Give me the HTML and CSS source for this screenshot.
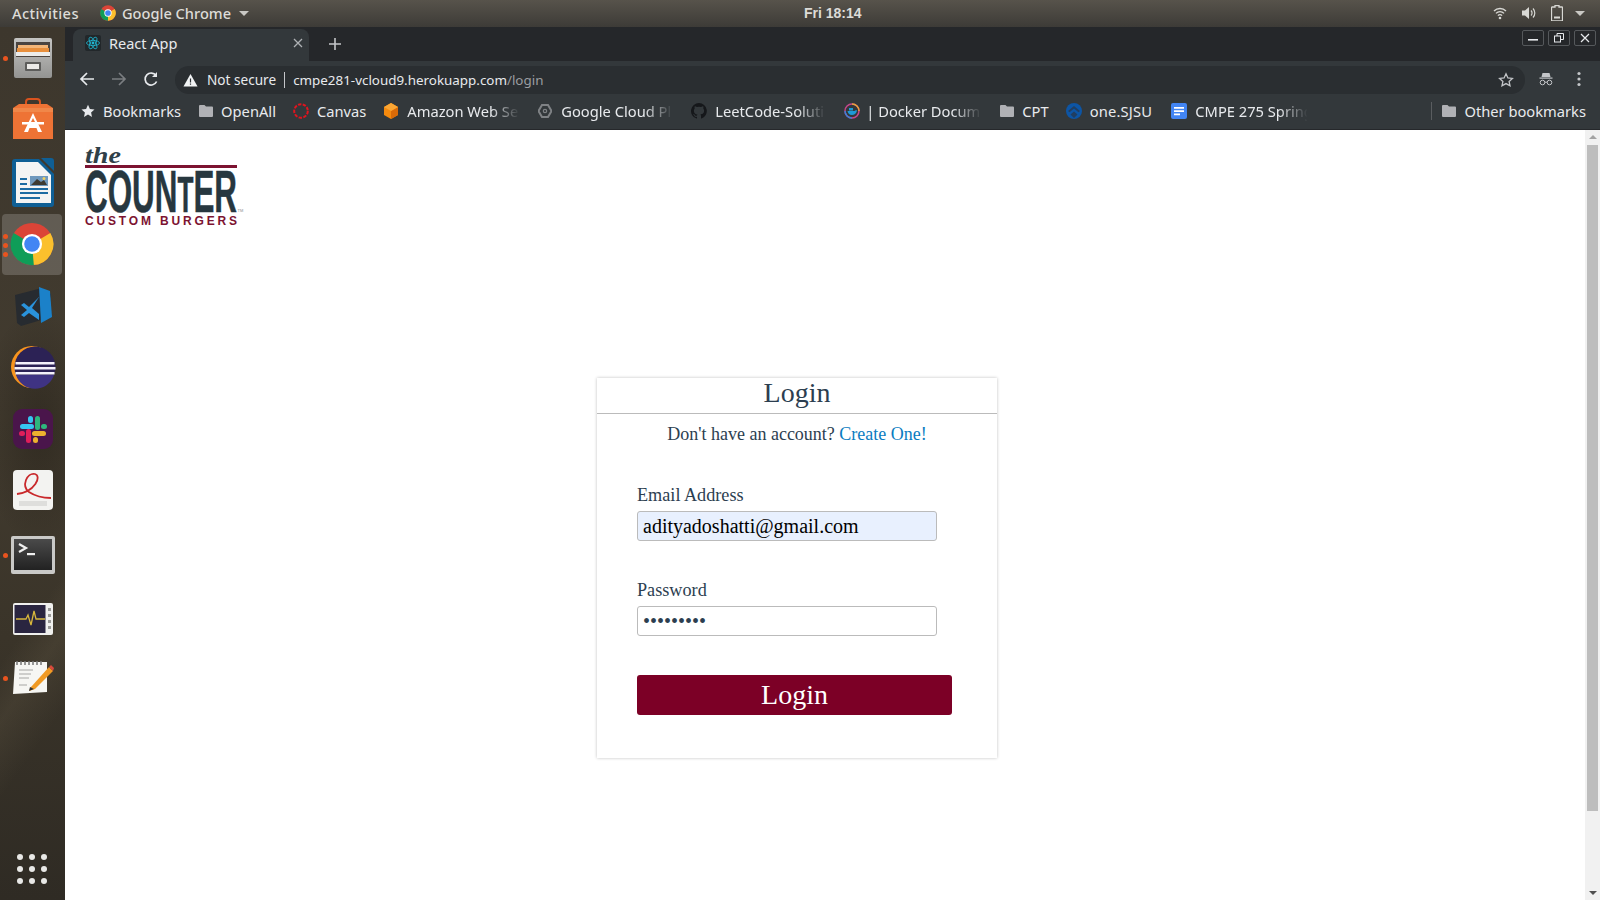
FILE: index.html
```html
<!DOCTYPE html>
<html lang="en">
<head>
  <meta charset="UTF-8">
  <title>React App</title>
  <link rel="stylesheet" href="styles.css">
</head>
<body>
  <!-- gnome top bar -->
  <div class="topbar">
    <div class="topbar-left">
      <span class="activities">Activities</span>
      <svg class="app-logo" width="16" height="16" viewBox="0 0 48 48"><circle cx="24" cy="24" r="23" fill="#db4437"/><path d="M24 24 L44 12 A23 23 0 0 1 24 47Z" fill="#fbc02d"/><path d="M24 24 L24 47 A23 23 0 0 1 4 12Z" fill="#0f9d58"/><circle cx="24" cy="24" r="11" fill="#fff"/><circle cx="24" cy="24" r="8.5" fill="#4285f4"/></svg>
      <span class="app-name">Google Chrome</span>
      <span class="caret"></span>
    </div>
    <div class="clock">Fri 18:14</div>
    <div class="tray">
      <svg width="14" height="14" viewBox="0 0 14 14" fill="none" stroke="#d8d8d4" stroke-width="1.4"><path d="M1 5a8.5 8.5 0 0 1 12 0M3 7.4a5.4 5.4 0 0 1 8 0M5 9.6a2.6 2.6 0 0 1 4 0"/><circle cx="7" cy="12" r="1.3" fill="#d8d8d4" stroke="none"/></svg>
      <svg width="16" height="14" viewBox="0 0 16 14" fill="none" stroke="#d8d8d4" stroke-width="1.2"><path d="M1 4.5h3L8 1v12L4 9.5H1z" fill="#d8d8d4" stroke="none"/><path d="M10 4.5a3.5 3.5 0 0 1 0 5M12 2.5a6.5 6.5 0 0 1 0 9"/></svg>
      <svg width="12" height="16" viewBox="0 0 12 16"><path d="M4 .5h4v1.5h3a.5.5 0 0 1 .5.5v13a.5.5 0 0 1-.5.5H1a.5.5 0 0 1-.5-.5v-13A.5.5 0 0 1 1 2h3z" fill="none" stroke="#d8d8d4" stroke-width="1.3"/><rect x="3" y="11.5" width="6" height="2" fill="#d8d8d4"/></svg>
      <span class="caret tray-caret"></span>
    </div>
  </div>

  <div class="desktop">
    <!-- ubuntu dock -->
    <div class="dock">
      <div class="dock-item">
        <span class="running"></span>
        <svg width="44" height="44" viewBox="0 0 44 44">
          <defs><linearGradient id="cabinet" x1="0" y1="0" x2="0" y2="1"><stop offset="0" stop-color="#c4c4c2"/><stop offset="1" stop-color="#949492"/></linearGradient></defs>
          <rect x="3" y="2" width="38" height="40" rx="2" fill="url(#cabinet)"/><rect x="5" y="6" width="34" height="15" fill="#4a4440"/><rect x="7" y="9" width="30" height="3" fill="#f4b678"/><rect x="6" y="12" width="32" height="4" fill="#e88f3c"/><rect x="5" y="16" width="34" height="4" fill="#ececea"/><rect x="14" y="26" width="16" height="9" rx="1" fill="#5d5d5b"/><rect x="16" y="28" width="12" height="5" fill="#ecebe8"/></svg>
      </div>
      <div class="dock-item">
        <svg width="44" height="44" viewBox="0 0 44 44"><path d="M15 8V5a3 3 0 0 1 3-3h8a3 3 0 0 1 3 3v3" fill="none" stroke="#d9531e" stroke-width="2"/><path d="M8 7h28l6 4v31H2V11z" fill="#ee7335"/><path d="M2 11h40v4H2z" fill="#f08749"/><path d="M22 16l9 19h-4l-1.500-4h-7L17 35h-4z" fill="#fff"/><rect x="11" y="25" width="22" height="2.500" fill="#fff"/><path d="M22 21l-2 4h4z" fill="#ee7335"/></svg>
      </div>
      <div class="dock-item dock-writer">
        <svg width="44" height="50" viewBox="0 0 44 50"><path d="M30 0h10a3 3 0 0 1 3 3v10z" fill="#0f5f95"/><path d="M4 1h24l15 15v30a3 3 0 0 1-3 3H4a3 3 0 0 1-3-3V4a3 3 0 0 1 3-3z" fill="#0f5f95"/><path d="M5 4h22l13 13v28H5z" fill="#f4f4f4"/><path d="M9 20h7v2H9zM9 25h7v2H9zM9 30h28v2H9zM9 34h28v2H9zM9 39h20v2H9z" fill="#1c6ba3"/><rect x="19" y="18" width="18" height="10" fill="#6f98bd"/><path d="M20 27l6-6 4 3 3-2 3 5z" fill="#3d3a32"/><circle cx="33" cy="20.500" r="1.500" fill="#f0d060"/></svg>
      </div>
      <div class="dock-item dock-active">
        <span class="running r1"></span><span class="running r2"></span><span class="running r3"></span>
        <svg width="44" height="44" viewBox="0 0 48 48"><circle cx="24" cy="24" r="23" fill="#db4437"/><path d="M24 24 L44 12 A23 23 0 0 1 24 47Z" fill="#fbc02d"/><path d="M24 24 L26 47 A23 23 0 0 1 4 12Z" fill="#0f9d58"/><circle cx="24" cy="24" r="11" fill="#fff"/><circle cx="24" cy="24" r="8.5" fill="#4285f4"/></svg>
      </div>
      <div class="dock-item">
        <svg width="42" height="42" viewBox="0 0 42 42"><path d="M3 10L30 3l9 6 -3 24L9 41 5 38z" fill="#272b30"/><path d="M27 2l11 4 2 26-11 6z" fill="#1b81c9"/><path d="M27 12L17 22l-5-4-3 2 6 5-6 5 3 2 5-4 10 7z" fill="#2a93dc"/><path d="M27 12v17l-7-6z" fill="#272b30"/></svg>
      </div>
      <div class="dock-item">
        <svg width="46" height="44" viewBox="0 0 46 44"><circle cx="22" cy="22" r="21" fill="#f7941e"/><circle cx="25" cy="22" r="20.500" fill="#2c2255"/><path d="M6 30h38a20 20 0 0 1-38 0z" fill="#3f3383"/><path d="M5.500 17h39v2.500h-39zM4.500 22h41v2.500h-41zM5.500 27h39v2.500h-39z" fill="#f4f1fa"/></svg>
      </div>
      <div class="dock-item">
        <svg width="40" height="40" viewBox="0 0 40 40"><rect width="40" height="40" rx="9" fill="#4a154b"/><rect x="7" y="15" width="14" height="5" rx="2.500" fill="#36c5f0"/><rect x="15" y="7" width="5" height="7" rx="2.500" fill="#36c5f0"/><rect x="22" y="7" width="5" height="14" rx="2.500" fill="#2eb67d"/><rect x="28" y="15" width="6" height="5" rx="2.500" fill="#2eb67d"/><rect x="19" y="22" width="14" height="5" rx="2.500" fill="#ecb22e"/><rect x="20" y="28" width="5" height="6" rx="2.500" fill="#ecb22e"/><rect x="13" y="20" width="5" height="14" rx="2.500" fill="#e01e5a"/><rect x="6" y="22" width="6" height="5" rx="2.500" fill="#e01e5a"/></svg>
      </div>
      <div class="dock-item">
        <svg width="40" height="40" viewBox="0 0 40 40"><rect width="40" height="40" rx="4" fill="#f3f3f1"/><path d="M4 24C22 22 29 6 22 4c-8-2-14 12-6 18 6 4 14 6 22 6" fill="none" stroke="#c9292c" stroke-width="1.800"/><rect x="6" y="31" width="28" height="5" fill="#dededc"/></svg>
      </div>
      <div class="dock-item dock-terminal">
        <span class="running"></span>
        <svg width="44" height="38" viewBox="0 0 44 38">
          <defs><linearGradient id="term" x1="0" y1="0" x2="0" y2="1"><stop offset="0" stop-color="#4a4a4a"/><stop offset="1" stop-color="#222"/></linearGradient></defs>
          <rect width="44" height="38" rx="2" fill="#c9c9c7"/><rect x="3" y="3" width="38" height="31" fill="url(#term)"/><path d="M8 8l7 4-7 4" fill="none" stroke="#efefef" stroke-width="2.200"/><rect x="16" y="17" width="8" height="2.200" fill="#efefef"/></svg>
      </div>
      <div class="dock-item dock-monitor">
        <svg width="40" height="32" viewBox="0 0 40 32"><rect width="40" height="32" rx="2" fill="#f0f0ee"/><rect x="1.500" y="2" width="31" height="28" fill="#2a2540"/><path d="M3 16h10l2-4 3 10 3-14 2 8h9" fill="none" stroke="#d8b73c" stroke-width="1.300"/><path d="M35 5h3v3h-3zM35 11h3v3h-3zM35 17h3v3h-3zM35 23h3v3h-3z" fill="#9a9a98"/></svg>
      </div>
      <div class="dock-item dock-gedit">
        <span class="running"></span>
        <svg width="44" height="38" viewBox="0 0 44 38"><path d="M4 3h32v30l-34 2z" fill="#f6f6f3"/><path d="M6 2v4M10 2v4M14 2v4M18 2v4M22 2v4M26 2v4M30 2v4" stroke="#777" stroke-width="1.500"/><path d="M8 11h14M8 15h12M8 19h10M8 26h8" stroke="#a6a6a4"/><path d="M20 28L38 8l4 4-18 18-6 2z" fill="#f09a24"/><path d="M38 8l2-2 3 3-1 3z" fill="#d94a3c"/><path d="M18 32l1-4 4 2z" fill="#333"/></svg>
      </div>
      <div class="app-grid">
        <span></span><span></span><span></span><span></span><span></span><span></span><span></span><span></span><span></span>
      </div>
    </div>

    <!-- browser window -->
    <div class="browser">
      <div class="tabstrip">
        <div class="tab">
          <svg class="favicon" width="16" height="16" viewBox="0 0 16 16" fill="none" stroke="#1fb6d2" stroke-width=".8"><rect width="16" height="16" rx="2" fill="#22272a" stroke="none"/><ellipse cx="8" cy="8" rx="6.500" ry="2.600"/><ellipse cx="8" cy="8" rx="6.500" ry="2.600" transform="rotate(60 8 8)"/><ellipse cx="8" cy="8" rx="6.500" ry="2.600" transform="rotate(120 8 8)"/><circle cx="8" cy="8" r="1.400" fill="#1fb6d2" stroke="none"/></svg>
          <span class="tab-title">React App</span>
          <svg class="tab-close" width="10" height="10" viewBox="0 0 10 10" stroke="#aeb1b4" stroke-width="1.300"><path d="M1 1l8 8M9 1l-8 8"/></svg>
        </div>
        <svg class="new-tab" width="14" height="14" viewBox="0 0 14 14" stroke="#c4c6c9" stroke-width="1.600"><path d="M7 1v12M1 7h12"/></svg>
        <div class="window-buttons">
          <span class="win-btn"><svg width="10" height="10" viewBox="0 0 10 10"><rect y="6" width="10" height="1.600" fill="#e8eaed"/></svg></span>
          <span class="win-btn"><svg width="10" height="10" viewBox="0 0 10 10" fill="none" stroke="#e8eaed"><rect x=".5" y="3" width="6" height="6"/><path d="M3 3V.5h6.500V6.500H7"/></svg></span>
          <span class="win-btn"><svg width="10" height="10" viewBox="0 0 10 10" stroke="#e8eaed" stroke-width="1.200"><path d="M1 1l8 8M9 1l-8 8"/></svg></span>
        </div>
      </div>

      <div class="toolbar">
        <svg class="nav-icon" width="16" height="16" viewBox="0 0 16 16" fill="none" stroke="#e8eaed" stroke-width="1.700"><path d="M15 8H2M8 2L2 8l6 6"/></svg>
        <svg class="nav-icon" width="16" height="16" viewBox="0 0 16 16" fill="none" stroke="#7b7e81" stroke-width="1.700"><path d="M1 8h13M8 2l6 6-6 6"/></svg>
        <svg class="nav-icon" width="16" height="16" viewBox="0 0 16 16" fill="none" stroke="#e8eaed" stroke-width="1.700"><path d="M13.600 10.500A6 6 0 1 1 13 4.500"/><path d="M14 1v5H9" fill="#e8eaed" stroke="none"/></svg>
        <div class="omnibox">
          <svg width="15" height="14" viewBox="0 0 15 14"><path d="M7.500 1L14.500 13.500H.5z" fill="#f1f3f4"/><path d="M6.900 5.500h1.200v4H6.900zM6.900 10.500h1.200v1.200H6.900z" fill="#2b2f32"/></svg>
          <span class="not-secure">Not secure</span>
          <span class="omni-divider"></span>
          <span class="url">cmpe281-vcloud9.herokuapp.com<span class="url-path">/login</span></span>
          <svg class="omni-star" width="16" height="16" viewBox="0 0 16 16" fill="none" stroke="#c4c6c9" stroke-width="1.300"><path d="M8 1.800l1.900 4.100 4.500.5-3.300 3 .9 4.400L8 11.600l-4 2.200.9-4.400-3.300-3 4.500-.5z"/></svg>
        </div>
        <svg class="incognito" width="16" height="16" viewBox="0 0 16 16" fill="none" stroke="#c4c6c9"><path d="M4.500 2h7l1 4h-9z" fill="#c4c6c9" stroke="none"/><rect x="1.500" y="6.500" width="13" height="1.200" fill="#c4c6c9" stroke="none"/><circle cx="4.500" cy="11.500" r="2.300"/><circle cx="11.500" cy="11.500" r="2.300"/><path d="M6.800 11.200h2.400"/></svg>
        <svg class="menu-dots" width="4" height="16" viewBox="0 0 4 16" fill="#c4c6c9"><circle cx="2" cy="2.500" r="1.600"/><circle cx="2" cy="8" r="1.600"/><circle cx="2" cy="13.500" r="1.600"/></svg>
      </div>

      <div class="bookmarks">
        <div class="bm bm-bookmarks">
          <svg width="14" height="14" viewBox="0 0 14 14" fill="#e8eaed"><path d="M7 .8l1.900 4.200 4.600.5-3.400 3.100.9 4.500L7 10.400l-4 2.700.9-4.500L.5 5.500 5.100 5z"/></svg>
          <span>Bookmarks</span>
        </div>
        <div class="bm bm-openall">
          <svg width="14" height="12" viewBox="0 0 14 12" fill="#b0b1b5"><path d="M1 0h4.500L7 1.500h6a1 1 0 0 1 1 1V11a1 1 0 0 1-1 1H1a1 1 0 0 1-1-1V1a1 1 0 0 1 1-1z"/></svg>
          <span>OpenAll</span>
        </div>
        <div class="bm bm-canvas">
          <svg width="16" height="16" viewBox="0 0 16 16" fill="none" stroke="#e0141e" stroke-width="2" stroke-dasharray="3.400 1.400"><circle cx="8" cy="8" r="6.800"/></svg>
          <span>Canvas</span>
        </div>
        <div class="bm bm-fade bm-aws">
          <svg width="16" height="16" viewBox="0 0 16 16"><path d="M8 0l7 4v8l-7 4-7-4V4z" fill="#f58a0e"/><path d="M8 8l7-4v8l-7 4z" fill="#d96a08"/><path d="M8 0l7 4-7 4-7-4z" fill="#fba634"/></svg>
          <span>Amazon Web Ser</span>
        </div>
        <div class="bm bm-fade bm-gcp">
          <svg width="14" height="14" viewBox="0 0 14 14" fill="none" stroke="#7f8285" stroke-width="2"><path d="M4 1h6l3.500 6L10 13H4L.5 7z"/><circle cx="7" cy="7" r="1.700" stroke-width="1.200"/></svg>
          <span>Google Cloud Pla</span>
        </div>
        <div class="bm bm-fade bm-github">
          <svg width="16" height="16" viewBox="0 0 16 16" fill="#15171a"><path d="M8 0a8 8 0 0 0-2.500 15.600c.4.100.5-.2.500-.4v-1.400c-2.200.5-2.700-1-2.700-1-.4-.9-.9-1.200-.9-1.200-.7-.5.100-.5.100-.5.800.1 1.200.8 1.200.8.700 1.200 1.900.9 2.300.7.100-.5.300-.9.500-1.100-1.800-.2-3.600-.9-3.600-4 0-.9.300-1.600.8-2.100-.1-.2-.4-1 .1-2.100 0 0 .7-.2 2.200.8a7.500 7.500 0 0 1 4 0c1.500-1 2.200-.8 2.200-.8.400 1.100.2 1.900.1 2.100.5.600.8 1.300.8 2.100 0 3.100-1.900 3.700-3.700 3.900.3.300.6.800.6 1.500v2.200c0 .2.100.5.600.4A8 8 0 0 0 8 0z"/></svg>
          <span>LeetCode-Soluti</span>
        </div>
        <div class="bm bm-fade bm-docker">
          <svg width="16" height="16" viewBox="0 0 16 16"><circle cx="8" cy="8" r="7" fill="none" stroke="#c5478a" stroke-width="1.500"/><path d="M8 1a7 7 0 0 1 7 7" fill="none" stroke="#e8a33a" stroke-width="1.500"/><path d="M1 8a7 7 0 0 0 7 7" fill="none" stroke="#3f7fd6" stroke-width="1.500"/><path d="M3.500 8h7c.8-1 2-.8 2.500-.5-.5 3-3 4.500-5 4.500-2.500 0-4-1.500-4.500-4z" fill="#1d9ad6"/><rect x="5" y="5" width="4" height="2.500" fill="#1d9ad6"/></svg>
          <span>| Docker Docume</span>
        </div>
        <div class="bm bm-cpt">
          <svg width="14" height="12" viewBox="0 0 14 12" fill="#b0b1b5"><path d="M1 0h4.500L7 1.500h6a1 1 0 0 1 1 1V11a1 1 0 0 1-1 1H1a1 1 0 0 1-1-1V1a1 1 0 0 1 1-1z"/></svg>
          <span>CPT</span>
        </div>
        <div class="bm bm-sjsu">
          <svg width="16" height="16" viewBox="0 0 16 16"><circle cx="8" cy="8" r="8" fill="#0d55a5"/><path d="M2 8l6-5 6 5-1.500 1.200L8 5.500 3.500 9.200zM4.500 11.500L8 8.500l3.500 3L8 15z" fill="#2d2f33" opacity=".6"/></svg>
          <span>one.SJSU</span>
        </div>
        <div class="bm bm-fade bm-docs">
          <svg width="16" height="16" viewBox="0 0 16 16"><rect width="16" height="16" rx="2" fill="#4285f4"/><path d="M3 4h10v1.800H3zM3 7.200h10V9H3zM3 10.400h6v1.800H3z" fill="#fff"/></svg>
          <span>CMPE 275 Spring</span>
        </div>
        <div class="bm-other">
          <span class="bm-separator"></span>
          <div class="bm">
            <svg width="14" height="12" viewBox="0 0 14 12" fill="#b0b1b5"><path d="M1 0h4.500L7 1.500h6a1 1 0 0 1 1 1V11a1 1 0 0 1-1 1H1a1 1 0 0 1-1-1V1a1 1 0 0 1 1-1z"/></svg>
            <span>Other bookmarks</span>
          </div>
        </div>
      </div>

      <div class="viewport">
        <div class="page">
          <svg class="logo" width="160" height="82" viewBox="0 0 160 82">
            <text class="logo-the" x="0" y="17" textLength="36" lengthAdjust="spacingAndGlyphs">the</text>
            <rect x="0" y="19" width="152" height="3" fill="#7c1331"/>
            <text class="logo-counter" x="0" y="66" textLength="152" lengthAdjust="spacingAndGlyphs">COUN<tspan class="logo-t">T</tspan>ER</text>
            <text class="logo-tm" x="152.500" y="66">TM</text>
            <text class="logo-custom" x="0" y="79" textLength="152">CUSTOM BURGERS</text>
          </svg>

          <div class="login-card">
            <h2 class="login-title">Login</h2>
            <p class="signup-note">Don't have an account? <a href="#" class="signup-link">Create One!</a></p>
            <form class="login-form">
              <label class="field-label" for="email">Email Address</label>
              <input class="field-input autofilled" id="email" type="text" value="adityadoshatti@gmail.com">
              <label class="field-label field-label-next" for="password">Password</label>
              <input class="field-input" id="password" type="password" value="123456789">
              <button class="login-button" type="button">Login</button>
            </form>
          </div>
        </div>
        <div class="scrollbar">
          <span class="arrow-up"></span>
          <span class="thumb"></span>
          <span class="arrow-down"></span>
        </div>
      </div>
    </div>
  </div>
</body>
</html>
```

FILE: styles.css
```css
* {
  box-sizing: border-box;
}
body {
  margin: 0;
  width: 1600px;
  height: 900px;
  overflow: hidden;
  font-family: "Noto Sans", sans-serif;
  background: #38332a;
}

/* top bar */
.topbar {
  height: 27px;
  display: flex;
  align-items: center;
  padding-bottom: 1px;
  background: linear-gradient(#57534b, #3d3b37);
  color: #dddcd8;
  font-size: 14.6px;
}
.topbar-left {
  width: 804px;
  padding-left: 12px;
  display: flex;
  align-items: center;
  font-weight: 500;
}
.activities {
  width: 88px;
  letter-spacing: .4px;
}
.app-logo {
  margin-right: 6px;
}
.app-name {
  width: 117px;
}
.caret {
  width: 0;
  height: 0;
  border-left: 5px solid transparent;
  border-right: 5px solid transparent;
  border-top: 5px solid #c9c8c4;
}
.clock {
  font-family: "Liberation Sans", sans-serif;
  font-weight: 700;
  font-size: 14px;
}
.tray {
  margin-left: auto;
  padding-right: 15px;
  display: flex;
  align-items: center;
  gap: 14px;
}
.tray-caret {
  margin-left: -2px;
}

.desktop {
  display: flex;
  height: 873px;
}

/* dock */
.dock {
  width: 65px;
  flex-shrink: 0;
  display: flex;
  flex-direction: column;
  background:
    linear-gradient(125deg, transparent 66%, rgba(120, 108, 84, .18) 72%, transparent 80%),
    radial-gradient(ellipse 60px 120px at 40px 400px, rgba(20, 16, 10, .35), transparent),
    linear-gradient(#3d372d, #423b2f 45%, #3a3429 70%, #2f2b24);
}
.dock-item {
  position: relative;
  height: 61.5px;
  flex-shrink: 0;
  display: flex;
  align-items: center;
  justify-content: center;
}
.dock-writer {
  margin-top: 2px;
}
.dock-terminal {
  margin-top: 3px;
}
.dock-monitor {
  margin-top: 3px;
}
.dock-gedit {
  margin-top: -3px;
}
.dock-active {
  margin: 0 3px 0 2px;
  border-radius: 4px;
  background: rgba(255, 255, 255, .18);
}
.running {
  position: absolute;
  left: 3px;
  top: 29px;
  width: 5px;
  height: 5px;
  border-radius: 50%;
  background: #e9541f;
}
.dock-active .running {
  left: 1px;
}
.dock-active .r1 {
  top: 20px;
}
.dock-active .r2 {
  top: 29px;
}
.dock-active .r3 {
  top: 38px;
}
.app-grid {
  margin-top: auto;
  margin-bottom: 16px;
  margin-left: 17px;
  width: 30px;
  display: grid;
  grid-template-columns: repeat(3, 6px);
  gap: 6px;
}
.app-grid span {
  width: 6px;
  height: 6px;
  border-radius: 50%;
  background: #e8e8e6;
}

/* browser */
.browser {
  flex: 1;
  display: flex;
  flex-direction: column;
  min-width: 0;
}
.tabstrip {
  height: 34px;
  display: flex;
  align-items: flex-end;
  padding-left: 8px;
  background: #25272a;
}
.tab {
  width: 236px;
  height: 32px;
  display: flex;
  align-items: center;
  padding: 0 6px 5px 12px;
  border-radius: 8px 8px 0 0;
  background: #33383b;
  color: #e8eaed;
  font-size: 14.5px;
}
.tab-title {
  margin-left: 8px;
}
.tab-close {
  margin-left: auto;
}
.new-tab {
  margin: 0 0 10px 19px;
}
.window-buttons {
  margin-left: auto;
  align-self: flex-start;
  display: flex;
  gap: 4px;
  padding: 3px 4px 0 0;
}
.win-btn {
  width: 22px;
  height: 16px;
  display: flex;
  align-items: center;
  justify-content: center;
  border: 1px solid #55585b;
  border-radius: 2px;
}
.toolbar {
  height: 33px;
  display: flex;
  align-items: flex-end;
  padding-left: 14px;
  background: #33383b;
}
.nav-icon {
  margin: 0 16px 7px 0;
}
.omnibox {
  width: 1350px;
  height: 28px;
  display: flex;
  align-items: center;
  padding: 0 11px 1px 8px;
  border-radius: 14px;
  background: #2a2e31;
  color: #e8eaed;
  font-size: 13.6px;
}
.not-secure {
  margin-left: 9px;
}
.omni-divider {
  width: 1px;
  height: 16px;
  margin: 0 8px;
  background: #c4c6c9;
}
.url {
  font-size: 13.4px;
}
.url-path {
  color: #9a9da0;
}
.omni-star {
  margin-left: auto;
}
.incognito {
  margin: 0 23px 7px 13px;
}
.menu-dots {
  margin-bottom: 7px;
}
.bookmarks {
  height: 36px;
  display: flex;
  align-items: center;
  gap: 17px;
  padding: 0 0 2px 15px;
  background: #33383b;
  border-bottom: 1px solid #26282b;
  color: #e8eaed;
  font-size: 14.7px;
}
.bm {
  display: flex;
  align-items: center;
  gap: 8px;
  white-space: nowrap;
  flex-shrink: 0;
}
.bm svg {
  flex-shrink: 0;
}
.bm-bookmarks {
  margin-left: 1px;
}
.bm-openall {
  margin-left: 1px;
}
.bm-fade {
  width: 136px;
  overflow: hidden;
  -webkit-mask-image: linear-gradient(to right, #000 78%, transparent 99%);
  mask-image: linear-gradient(to right, #000 78%, transparent 99%);
}
.bm-aws {
  width: 138px;
}
.bm-gcp {
  gap: 9px;
}
.bm-docker {
  width: 139px;
  gap: 6px;
}
.bm-sjsu {
  margin-right: 2px;
  letter-spacing: .2px;
}
.bm-docs {
  width: 138px;
}
.bm-other {
  margin-left: auto;
  display: flex;
  align-items: center;
  gap: 10px;
  padding-right: 14px;
}
.bm-separator {
  width: 1px;
  height: 18px;
  background: #5a5d60;
}

/* page */
.viewport {
  flex: 1;
  display: flex;
  min-height: 0;
  background: #fff;
}
.page {
  flex: 1;
  padding: 16px 0 0 20px;
  color: #2c3e50;
  font-family: "Liberation Serif", serif;
}
.logo {
  display: block;
  overflow: visible;
}
.logo-the {
  font-family: "Liberation Serif", serif;
  font-style: italic;
  font-weight: 700;
  font-size: 24px;
  fill: #2f4048;
}
.logo-counter {
  font-family: "Liberation Sans Narrow", "Liberation Sans", sans-serif;
  font-weight: 700;
  font-size: 60px;
  fill: #27373f;
  stroke: #27373f;
  stroke-width: .5px;
}
.logo-t {
  font-size: 50px;
}
.logo-tm {
  font-family: "Liberation Sans", sans-serif;
  font-size: 4px;
  fill: #8a8f92;
}
.logo-custom {
  font-family: "Liberation Sans", sans-serif;
  font-weight: 700;
  font-size: 12px;
  fill: #7c1331;
}
.login-card {
  width: 400px;
  height: 380px;
  margin: 150px 0 0 512px;
  box-shadow: 0 0 3px rgba(0, 0, 0, .25);
}
.login-title {
  margin: 0;
  height: 36px;
  border-bottom: 1px solid #bbb;
  font-size: 28px;
  font-weight: 400;
  line-height: 30px;
  text-align: center;
}
.signup-note {
  margin: 9px 0 0;
  font-size: 18px;
  line-height: 22px;
  text-align: center;
}
.signup-link {
  color: #0a7cc1;
  text-decoration: none;
}
.login-form {
  padding: 39px 0 0 40px;
}
.field-label {
  display: block;
  font-size: 18.2px;
  line-height: 22px;
}
.field-label-next {
  margin-top: 38px;
}
.field-input {
  display: block;
  width: 300px;
  height: 30px;
  margin-top: 5px;
  padding: 0 5px;
  border: 1px solid #bbb;
  border-radius: 3px;
  font-family: "Liberation Serif", serif;
  font-size: 20px;
  color: #2c3e50;
  background: #fff;
  outline: none;
}
.autofilled {
  background: #e8f0fe;
  color: #000;
}
.login-button {
  display: block;
  width: 315px;
  height: 40px;
  margin-top: 39px;
  padding: 0;
  border: none;
  border-radius: 3px;
  background: #7c0026;
  color: #fff;
  font-family: "Liberation Serif", serif;
  font-size: 28px;
}

/* scrollbar */
.scrollbar {
  width: 15px;
  flex-shrink: 0;
  display: flex;
  flex-direction: column;
  align-items: center;
  background: #f1f1f1;
}
.arrow-up {
  margin-top: 5px;
  border-left: 4px solid transparent;
  border-right: 4px solid transparent;
  border-bottom: 4px solid #a3a3a3;
}
.thumb {
  width: 11px;
  height: 666px;
  margin-top: 6px;
  background: #bdbdbd;
}
.arrow-down {
  margin-top: auto;
  margin-bottom: 5px;
  border-left: 4px solid transparent;
  border-right: 4px solid transparent;
  border-top: 4px solid #505050;
}
```
